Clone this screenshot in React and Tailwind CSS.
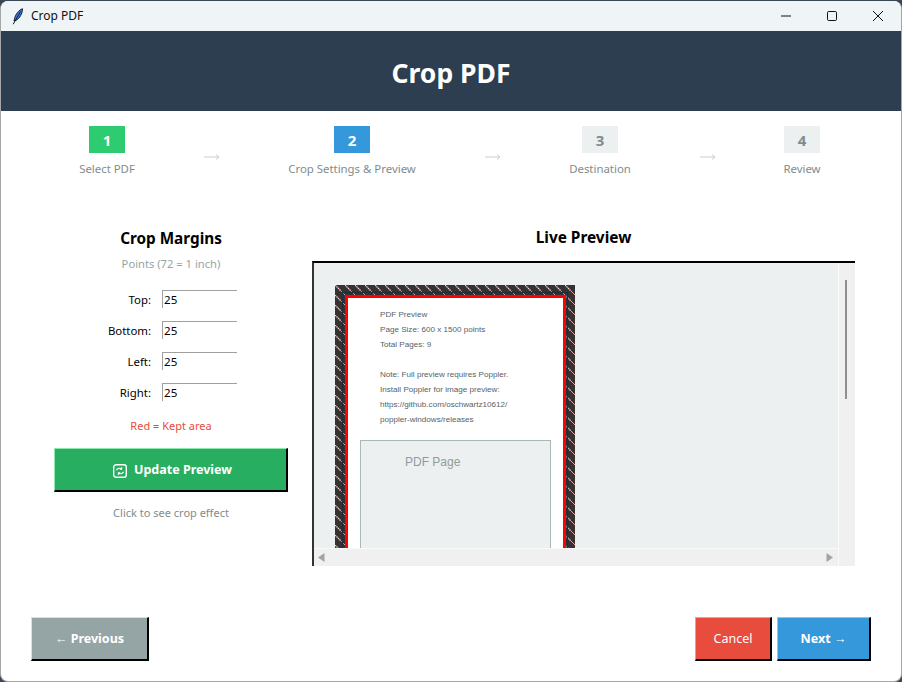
const steps = [
  { n: "1", label: "Select PDF", box: "bg-[#2ecc71] text-white" },
  { n: "2", label: "Crop Settings & Preview", box: "bg-[#3498db] text-white" },
  { n: "3", label: "Destination", box: "bg-[#ecf0f1] text-[#7f8c8d]" },
  { n: "4", label: "Review", box: "bg-[#ecf0f1] text-[#7f8c8d]" },
];

function Feather() {
  return (
    <svg width="12" height="17" viewBox="0 0 12 17">
      <path d="M10.5 .8C7 2 3.6 6 2.6 10.5L2 13l2.4-.8C7.5 10.5 10.5 5.5 10.5 .8Z" fill="#3f7fe0" stroke="#0b1a33" strokeWidth="1" />
      <path d="M8.5 3.5 1.2 16.2" stroke="#0b1a33" strokeWidth="1" fill="none" />
    </svg>
  );
}

function Field({ label }) {
  return (
    <div className="flex items-center h-[18px]">
      <label className="w-[97px] pt-[1px] text-right text-[11.4px] text-black">{label}:</label>
      <input
        readOnly
        value="25"
        className="ml-[11px] w-[75px] h-[18px] border-l border-t border-[#a0a0a0] pl-[1px] text-[11.6px] text-black outline-none bg-white"
      />
    </div>
  );
}

function PagePreview() {
  const lines = [
    ["PDF Preview", 317],
    ["Page Size: 600 x 1500 points", 332],
    ["Total Pages: 9", 347],
    ["Note: Full preview requires Poppler.", 377],
    ["Install Poppler for image preview:", 392],
    ["https://github.com/oschwartz10612/", 407],
    ["poppler-windows/releases", 422],
  ];
  return (
    <svg width="524" height="286" viewBox="314 263 524 286" className="block">
      <defs>
        <pattern id="hatch" width="10" height="10" patternUnits="userSpaceOnUse" patternTransform="translate(335 285)">
          <rect width="10" height="10" fill="#333333" />
          <path d="M0 0 5.5 5.5" stroke="#ffd0d0" strokeWidth="1.2" strokeDasharray="1.5 .6" />
          <path d="M5.5 5.5 10 10" stroke="#ea9a9a" strokeWidth="1" />
        </pattern>
      </defs>
      <rect x="335" y="285" width="240" height="300" fill="url(#hatch)" />
      <rect x="342.5" y="292.5" width="225" height="300" fill="none" stroke="#1c2e40" strokeWidth="1.5" />
      <rect x="346.5" y="296.5" width="218" height="300" fill="#ffffff" stroke="#ff0000" strokeWidth="3" />
      {lines.map(([t, y]) => (
        <text key={t} x="380" y={y} fontFamily="Liberation Sans, sans-serif" fontSize="8.1" fill="#565f68">
          {t}
        </text>
      ))}
      <rect x="360.5" y="440.5" width="190" height="150" fill="#ecf0f1" stroke="#a9b9b5" strokeWidth="1" />
      <text x="405" y="466" fontFamily="Liberation Sans, sans-serif" fontSize="12" fill="#8f9c9d">
        PDF Page
      </text>
    </svg>
  );
}

function ActionButton({ className, children }) {
  return (
    <button className={"h-[44px] flex items-center justify-center pt-[2px] text-white text-[12.5px] border-t border-l border-b-2 border-r-2 border-b-black border-r-black " + className}>
      {children}
    </button>
  );
}

function Step({ s, cls }) {
  return (
    <div className={"flex flex-col items-center shrink-0 " + cls}>
      <div className={"w-[36px] h-[27px] pt-[1px] flex items-center justify-center text-[15px] font-bold " + s.box}>{s.n}</div>
      <div className="mt-[7px] text-[11.4px] leading-[17px] whitespace-nowrap text-[#7f8c8d]">{s.label}</div>
    </div>
  );
}

function Arrow({ cls }) {
  return (
    <div className={"shrink-0 pt-[27px] " + cls}>
      <svg width="16" height="8" viewBox="0 0 16 8" className="block">
        <path d="M0 4h15M12 1.5 15 4l-3 2.5" fill="none" stroke="#c9cfd1" strokeWidth="1" />
      </svg>
    </div>
  );
}

export default function App() {
  return (
    <div className="w-[902px] h-[682px] pt-[1px] bg-[#3a4754]" style={{ fontFamily: '"Noto Sans", sans-serif' }}>
      <div className="h-[681px] flex flex-col bg-white rounded-[8px] border-x border-b border-[#a6a6a6] overflow-hidden">
        {/* title bar */}
        <div className="h-[30px] shrink-0 bg-[#eff4f7] flex items-center pl-[11px]">
          <Feather />
          <span className="ml-[7px] text-[12px] text-[#111]">Crop PDF</span>
          <div className="ml-auto flex items-center">
            <svg width="46" height="30" viewBox="0 0 46 30">
              <path d="M18 15h10" stroke="#111" strokeWidth="1" />
            </svg>
            <svg width="46" height="30" viewBox="0 0 46 30">
              <rect x="18.5" y="10.5" width="9" height="9" rx="1.2" fill="none" stroke="#111" strokeWidth="1" />
            </svg>
            <svg width="46" height="30" viewBox="0 0 46 30">
              <path d="M18 10l10 10M28 10 18 20" stroke="#111" strokeWidth="1" />
            </svg>
          </div>
        </div>

        {/* header */}
        <div className="h-[80px] shrink-0 pt-[5px] bg-[#2c3e50] flex items-center justify-center">
          <h1 className="text-[26.5px] font-bold text-white">Crop PDF</h1>
        </div>

        {/* steps */}
        <div className="h-[80px] shrink-0 pt-[15px] flex items-start">
          <Step s={steps[0]} cls="ml-[31px] w-[150px]" />
          <Arrow cls="ml-[22px]" />
          <Step s={steps[1]} cls="ml-[47px] w-[170px]" />
          <Arrow cls="ml-[48px]" />
          <Step s={steps[2]} cls="ml-[39px] w-[120px]" />
          <Arrow cls="ml-[40px]" />
          <Step s={steps[3]} cls="ml-[46px] w-[80px]" />
        </div>

        {/* main */}
        <div className="flex-1 flex pl-[53px] pt-[35px]">
          <div className="w-[234px] flex flex-col items-center">
            <h2 className="h-[24px] leading-[24px] text-[15.3px] font-bold text-black">Crop Margins</h2>
            <p className="mt-[6px] text-[11.2px] leading-[16px] text-[#95a5a6]">Points (72 = 1 inch)</p>
            <div className="mt-[18px] self-start flex flex-col gap-[13px]">
              <Field label="Top" />
              <Field label="Bottom" />
              <Field label="Left" />
              <Field label="Right" />
            </div>
            <p className="mt-[17px] text-[11px] leading-[16px] text-[#e74c3c]">Red = Kept area</p>
            <ActionButton className="mt-[14px] w-[234px] pl-[4px] bg-[#27ae60] border-t-[#8ee8b0] border-l-[#8ee8b0] font-bold">
              <svg width="14" height="14" viewBox="0 0 14 14" className="mr-[7px]">
                <rect x=".7" y=".7" width="12.6" height="12.6" rx="2.4" fill="none" stroke="#fff" strokeWidth="1.4" />
                <path d="M3.5 6.2C4 4.6 6.5 3.6 8.6 4.8M8.6 3.2v2H6.8M10.5 7.8C10 9.4 7.5 10.4 5.4 9.2M5.4 10.8v-2h1.8" fill="none" stroke="#fff" strokeWidth="1.2" />
              </svg>
              Update Preview
            </ActionButton>
            <p className="mt-[13px] text-[11px] leading-[16px] text-[#7f8c8d]">Click to see crop effect</p>
          </div>

          <div className="ml-[24px] w-[543px] flex flex-col">
            <h2 className="h-[24px] leading-[24px] text-center text-[15.4px] font-bold text-black">Live Preview</h2>
            <div className="mt-[11px] h-[305px] border-t-2 border-l-2 border-t-black border-l-[#333] flex bg-[#f0f0f0]">
              <div className="w-[524px] flex flex-col">
                <div className="h-[285px] bg-[#ecf0f1] overflow-hidden">
                  <PagePreview />
                </div>
                <div className="flex-1 border-t border-[#fafafa] flex items-center justify-between pl-[4px] pr-[5px]">
                  <svg width="7" height="9" viewBox="0 0 7 9"><path d="M6.5 0v9L0 4.5Z" fill="#a3a3a3" /></svg>
                  <svg width="7" height="9" viewBox="0 0 7 9"><path d="M.5 0v9L7 4.5Z" fill="#a3a3a3" /></svg>
                </div>
              </div>
              <div className="w-[17px] border-l border-[#fafafa] flex justify-center pt-[17px] pr-[2px]">
                <div className="w-[2px] h-[119px] bg-[#8f8f8f]" />
              </div>
            </div>
          </div>
        </div>

        {/* footer */}
        <div className="h-[64px] shrink-0 flex items-start px-[30px]">
          <ActionButton className="w-[118px] bg-[#95a5a6] border-t-[#d4e4e6] border-l-[#d4e4e6] font-bold">← Previous</ActionButton>
          <ActionButton className="ml-auto w-[77px] bg-[#e74c3c] border-t-[#f59a90] border-l-[#f59a90]">Cancel</ActionButton>
          <ActionButton className="ml-[5px] w-[94px] bg-[#3498db] border-t-[#8cc8f0] border-l-[#8cc8f0] font-bold">Next →</ActionButton>
        </div>
      </div>
    </div>
  );
}
